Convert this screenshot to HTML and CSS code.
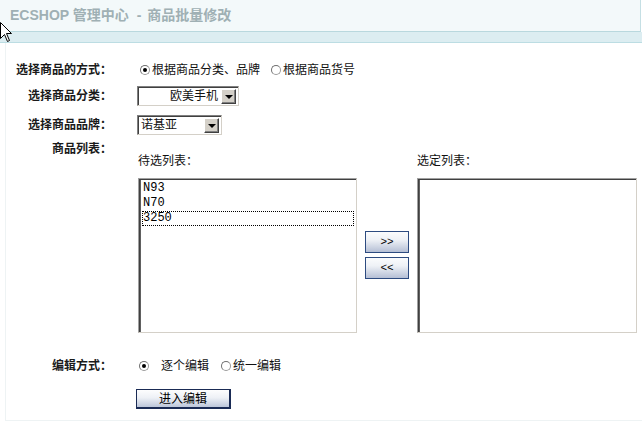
FILE: index.html
```html
<!DOCTYPE html>
<html lang="zh-CN">
<head>
  <meta charset="UTF-8" />
  <title>ECSHOP 管理中心 - 商品批量修改</title>
  <link rel="stylesheet" href="styles.css">
</head>
<body>
  <header class="page-head">
    <h1>ECSHOP 管理中心 <span class="sep">-</span> 商品批量修改</h1>
  </header>
  <div class="page-band"></div>

  <!--ponteiro do mouse-->
  <svg class="cursor" width="13" height="21" viewBox="0 0 13 21">
    <path d="M0.5 0.5 L0.5 16.5 L4.5 12.5 L7.5 19.5 L9.5 18.5 L6.5 11.5 L11.5 11.5 Z" fill="#fff" stroke="#000" stroke-width="1"/>
  </svg>

  <div class="main">
    <form class="batch-form">
      <label class="f-label">选择商品的方式：</label>
      <div class="f-field">
        <span class="radio checked"></span>根据商品分类、品牌
        <span class="radio second"></span>根据商品货号
      </div>

      <label class="f-label">选择商品分类：</label>
      <div class="f-field">
        <div class="dropdown cat">
          <span class="dd-text right">欧美手机</span>
          <span class="dd-arrow"></span>
        </div>
      </div>

      <label class="f-label">选择商品品牌：</label>
      <div class="f-field">
        <div class="dropdown brand">
          <span class="dd-text">诺基亚</span>
          <span class="dd-arrow"></span>
        </div>
      </div>

      <label class="f-label list-label">商品列表：</label>
      <div class="lists">
        <div class="list-title">待选列表：</div>
        <div></div>
        <div class="list-title">选定列表：</div>

        <div class="listbox">
          <div class="opt">N93</div>
          <div class="opt">N70</div>
          <div class="opt focused">3250</div>
        </div>
        <div class="move-btns">
          <button type="button" class="btn-move">&gt;&gt;</button>
          <button type="button" class="btn-move">&lt;&lt;</button>
        </div>
        <div class="listbox"></div>
      </div>

      <label class="f-label">编辑方式：</label>
      <div class="f-field edit-mode">
        <span class="radio checked"></span><span class="gap">逐个编辑</span>
        <span class="radio second"></span>统一编辑
      </div>

      <div></div>
      <div class="f-field">
        <button type="button" class="btn-submit">进入编辑</button>
      </div>
    </form>
  </div>
</body>
</html>
```

FILE: styles.css
```css
* {
  margin: 0;
  padding: 0;
  box-sizing: border-box;
}

body {
  font-family: "Liberation Sans", "Noto Sans CJK SC", sans-serif;
  font-size: 12px;
  color: #111;
  background-color: #fff;
  width: 642px;
  height: 422px;
  overflow: hidden;
  position: relative;
}

/* topo */
.page-head {
  width: 641px;
  height: 32px;
  background-color: #f3f9fa;
  border-right: 1px solid #c5dfe4;
  border-bottom: 1px solid #b9d8de;
  padding-left: 10px;
}

.page-head h1 {
  font-size: 14px;
  line-height: 31px;
  font-weight: bold;
  color: #9fb0b4;
}

.page-head .sep {
  margin: 0 2px 0 4px;
}

.page-band {
  height: 11px;
  background-color: #dcedf1;
  border-bottom: 1px solid #bcdde3;
}

.cursor {
  position: absolute;
  top: 22px;
  left: 0;
}

/* conteudo */
.main {
  margin-left: 5px;
  height: 378px;
  border-left: 1px solid #eef3f4;
  border-bottom: 1px solid #eef3f4;
  padding-top: 17px;
}

.batch-form {
  display: grid;
  grid-template-columns: 106px 1fr;
  grid-template-rows: 26px 29px 25px 216px 30px auto;
  column-gap: 25px;
}

.f-label {
  font-weight: bold;
  text-align: right;
  line-height: 20px;
  color: #1a1a1a;
}

.list-label {
  line-height: 18px;
}

.f-field {
  line-height: 20px;
  display: flex;
  align-items: center;
  height: 20px;
}

.radio {
  display: inline-block;
  width: 10px;
  height: 10px;
  border-radius: 50%;
  border: 1px solid #9a9a9a;
  border-top-color: #707070;
  border-left-color: #707070;
  background-color: #fff;
  margin: 0 2px 0 3px;
  position: relative;
}

.radio.checked::after {
  content: "";
  position: absolute;
  left: 2px;
  top: 2px;
  width: 4px;
  height: 4px;
  border-radius: 50%;
  background-color: #000;
}

.radio.second {
  margin-left: 11px;
}

.edit-mode .radio {
  margin-left: 2px;
}

.edit-mode .gap {
  margin-left: 10px;
}

.edit-mode .radio.second {
  margin-left: 12px;
}

/* selects */
.dropdown {
  height: 20px;
  display: flex;
  align-items: center;
  border: 1px solid #808080;
  border-right-color: #d4d0c8;
  border-bottom-color: #d4d0c8;
  box-shadow: inset 1px 1px 0 #404040;
  background-color: #fff;
  padding: 2px 2px 2px 3px;
}

.dropdown.cat {
  width: 102px;
}

.dropdown.brand {
  width: 85px;
}

.dd-text {
  flex: 1;
  font-size: 12px;
  line-height: 16px;
}

.dd-text.right {
  text-align: right;
  padding-right: 3px;
}

.dd-arrow {
  width: 15px;
  height: 15px;
  background-color: #d4d0c8;
  border: 1px solid #fff;
  border-right-color: #404040;
  border-bottom-color: #404040;
  box-shadow: inset -1px -1px 0 #808080;
  position: relative;
}

.dd-arrow::after {
  content: "";
  position: absolute;
  left: 3px;
  top: 5px;
  border-left: 4px solid transparent;
  border-right: 4px solid transparent;
  border-top: 4px solid #000;
}

/* listas */
.lists {
  display: grid;
  grid-template-columns: 219px 44px 220px;
  grid-template-rows: 18px 155px;
  column-gap: 8px;
  row-gap: 8px;
  padding: 12px 0 0 1px;
}

.list-title {
  line-height: 18px;
}

.listbox {
  border: 1px solid #a0a0a0;
  border-right-color: #d4d0c8;
  border-bottom-color: #d4d0c8;
  box-shadow: inset 1px 1px 0 #404040, inset 2px 0 0 #606060;
  background-color: #fff;
  padding: 2px 2px 0 3px;
}

.opt {
  font-family: "Liberation Mono", "Courier New", monospace;
  font-size: 12px;
  line-height: 15px;
  height: 15px;
  padding-left: 1px;
  color: #000;
}

.opt.focused {
  outline: 1px dotted #000;
  outline-offset: -1px;
}

.move-btns {
  display: flex;
  flex-direction: column;
  justify-content: center;
  gap: 4px;
  padding-bottom: 1px;
}

.btn-move {
  width: 44px;
  height: 22px;
  border: 1px solid #2d4b80;
  background: linear-gradient(#fbfcfd, #eef1f6 40%, #b5bfd5);
  font-family: "Liberation Mono", monospace;
  font-size: 11px;
  color: #000;
}

.btn-submit {
  width: 95px;
  height: 20px;
  margin-left: -1px;
  margin-top: 6px;
  border: 1px solid #1a2b55;
  border-right-width: 2px;
  border-bottom-width: 2px;
  background: linear-gradient(#fdfdfe, #eef1f6 45%, #bcc6da);
  font-family: "Liberation Sans", "Noto Sans CJK SC", sans-serif;
  font-size: 12px;
  line-height: 16px;
  color: #000;
}
```
